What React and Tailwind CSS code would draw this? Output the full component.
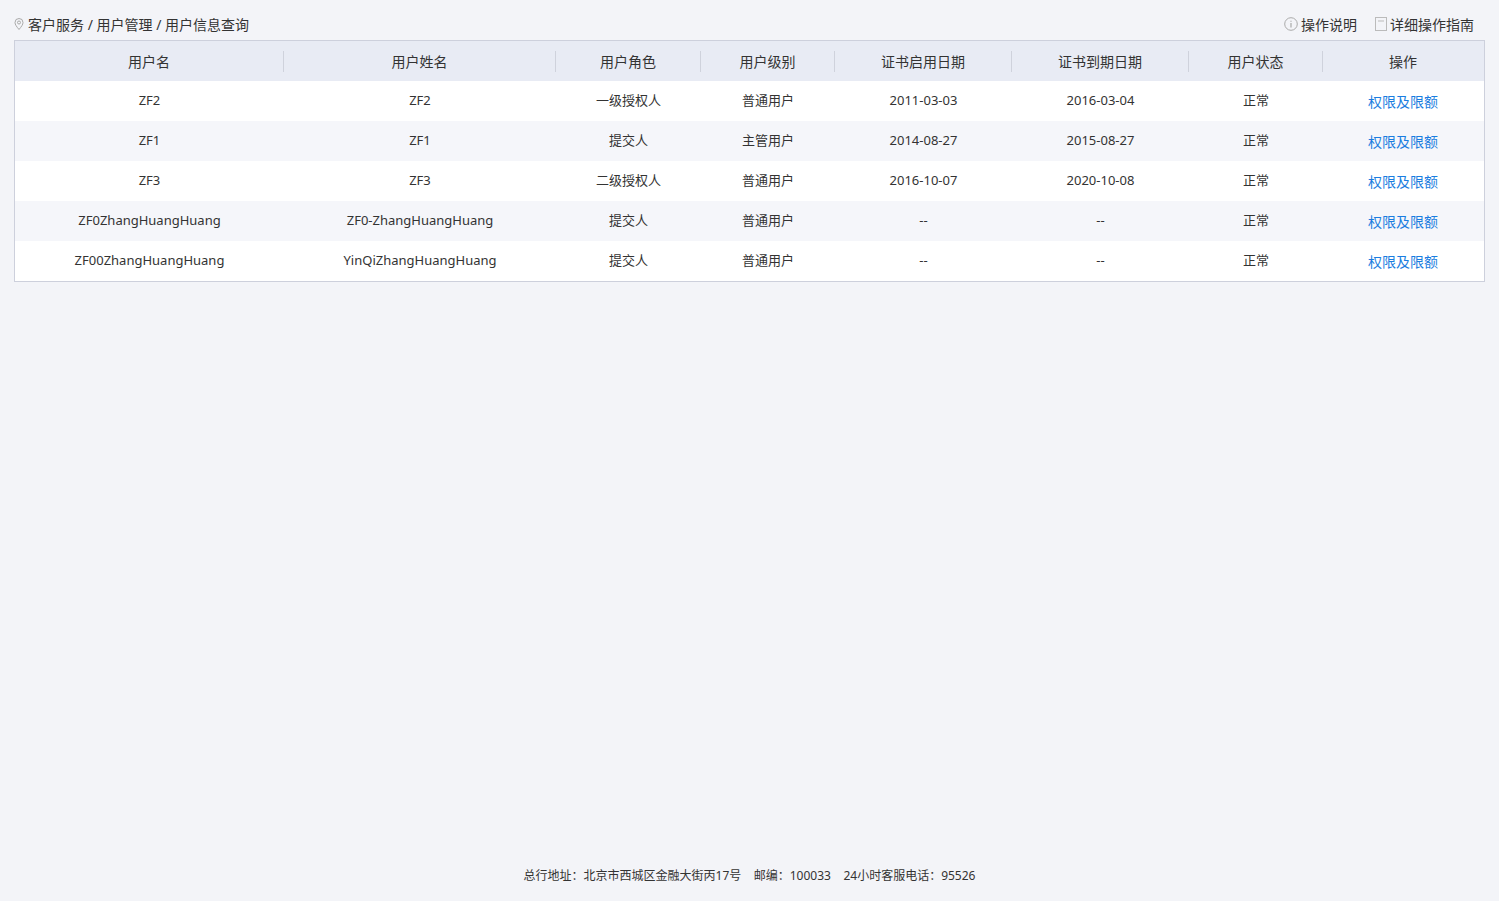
const cols=[269,272,145,134,177,177,134,160];
const heads=["用户名","用户姓名","用户角色","用户级别","证书启用日期","证书到期日期","用户状态","操作"];
const rows=[
["ZF2","ZF2","一级授权人","普通用户","2011-03-03","2016-03-04","正常"],
["ZF1","ZF1","提交人","主管用户","2014-08-27","2015-08-27","正常"],
["ZF3","ZF3","二级授权人","普通用户","2016-10-07","2020-10-08","正常"],
["ZF0ZhangHuangHuang","ZF0-ZhangHuangHuang","提交人","普通用户","--","--","正常"],
["ZF00ZhangHuangHuang","YinQiZhangHuangHuang","提交人","普通用户","--","--","正常"],
];
const tpl={gridTemplateColumns:cols.map(c=>c+"px").join(" ")};
export default function App(){
return <div className="min-h-[901px] bg-[#f3f4f8] flex flex-col text-[#333]" style={{fontFamily:'"Noto Sans","Noto Sans CJK SC",sans-serif'}}>
<div className="flex items-center justify-between pl-[14px] pr-[25px] h-[40px] pt-[8px] text-[14px]">
<div className="flex items-center gap-[4px]">
<svg width="10" height="12" viewBox="0 0 10 12"><path d="M5 11.5C2.5 8.5 1 6.5 1 4.5a4 4 0 0 1 8 0c0 2-1.5 4-4 7z" fill="none" stroke="#aaa"/><circle cx="5" cy="4.5" r="1.5" fill="none" stroke="#aaa"/></svg>
<span>客户服务 / 用户管理 / 用户信息查询</span></div>
<div className="flex items-center gap-[18px]">
<span className="flex items-center gap-[3px]"><svg width="14" height="14" viewBox="0 0 14 14"><circle cx="7" cy="7" r="6.3" fill="none" stroke="#aaa"/><path d="M7 6v4.5M7 3.8v1" stroke="#aaa" strokeWidth="1.2"/></svg>操作说明</span>
<span className="flex items-center gap-[3px]"><svg width="12" height="14" viewBox="0 0 12 14"><rect x="0.5" y="0.5" width="11" height="13" fill="none" stroke="#bbb"/><path d="M3 4h6" stroke="#bbb"/></svg>详细操作指南</span>
</div></div>
<div className="mx-[14px] border border-[#cdd0dc] bg-white text-[13px]">
<div className="grid h-[40px] bg-[#e8ebf4] items-center" style={tpl}>
{heads.map((h,i)=><div key={i} className={"text-center text-[14px] "+(i<7?"border-r border-[#cfd2dc]":"")}>{h}</div>)}
</div>
{rows.map((r,j)=><div key={j} className={"grid h-[40px] items-center "+(j%2?"bg-[#f5f6fa]":"bg-white")} style={tpl}>
{r.map((c,i)=><div key={i} className="text-center">{c}</div>)}
<div className="text-center text-[14px] text-[#1a7de0]">权限及限额</div>
</div>)}
</div>
<div className="flex-1"></div>
<div className="text-center text-[12px] pb-[16px]">总行地址：北京市西城区金融大街丙17号&nbsp;&nbsp;&nbsp;&nbsp;邮编：100033&nbsp;&nbsp;&nbsp;&nbsp;24小时客服电话：95526</div>
</div>}
